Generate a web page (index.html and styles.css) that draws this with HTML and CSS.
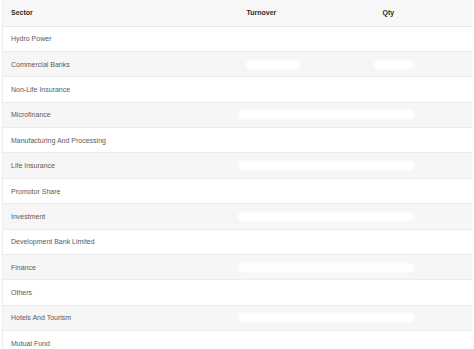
FILE: index.html
```html
<!DOCTYPE html>
<html lang="en">
<head>
    <meta charset="UTF-8">
    <meta name="viewport" content="width=device-width, initial-scale=1.0">
    <title>Sector Turnover</title>
    <link rel="stylesheet" href="styles.css">
</head>
<body>
    <div class="table-wrap">
        <table class="sector-table">
            <colgroup>
                <col class="col-sector">
                <col class="col-turnover">
                <col class="col-qty">
            </colgroup>
            <thead>
                <tr>
                    <th>Sector</th>
                    <th>Turnover</th>
                    <th>Qty</th>
                </tr>
            </thead>
            <tbody>
                <tr><td>Hydro Power</td><td><span class="blob short"></span></td><td><span class="blob qty"></span></td></tr>
                <tr><td>Commercial Banks</td><td><span class="blob short"></span></td><td><span class="blob qty"></span></td></tr>
                <tr><td>Non-Life Insurance</td><td><span class="blob long"></span></td><td></td></tr>
                <tr><td>Microfinance</td><td><span class="blob long"></span></td><td></td></tr>
                <tr><td>Manufacturing And Processing</td><td><span class="blob long"></span></td><td></td></tr>
                <tr><td>Life Insurance</td><td><span class="blob long"></span></td><td></td></tr>
                <tr><td>Promotor Share</td><td><span class="blob long"></span></td><td></td></tr>
                <tr><td>Investment</td><td><span class="blob long"></span></td><td></td></tr>
                <tr><td>Development Bank Limited</td><td><span class="blob long"></span></td><td></td></tr>
                <tr><td>Finance</td><td><span class="blob long"></span></td><td></td></tr>
                <tr><td>Others</td><td><span class="blob long"></span></td><td></td></tr>
                <tr><td>Hotels And Tourism</td><td><span class="blob long"></span></td><td></td></tr>
                <tr><td>Mutual Fund</td><td><span class="blob long"></span></td><td></td></tr>
            </tbody>
        </table>
    </div>
</body>
</html>
```

FILE: styles.css
```css
* {
    margin: 0;
    padding: 0;
    box-sizing: border-box;
}

body {
    font-family: 'Liberation Sans', Arial, sans-serif;
    background: white;
    overflow: hidden;
}

.table-wrap {
    padding-left: 2px;
    width: 472px;
}

.sector-table {
    width: 100%;
    border-collapse: collapse;
    table-layout: fixed;
    border-left: 1px solid #ececec;
    font-size: 7px;
}

.col-sector {
    width: 236px;
}

.col-turnover {
    width: 136px;
}

.sector-table th,
.sector-table td {
    text-align: left;
    padding: 0 8px;
    vertical-align: middle;
    white-space: nowrap;
}

.sector-table th {
    height: 26px;
    background: #f7f7f7;
    color: #2b2b2b;
    font-weight: bold;
    border-bottom: 1px solid #e6e6e6;
}

.sector-table td {
    height: 25.4px;
    color: #5a5a5a;
    border-bottom: 1px solid #ececec;
}

.sector-table tbody tr:nth-child(even) td {
    background: #f6f6f6;
}

.sector-table td:nth-child(2) {
    padding-left: 4px;
}

.blob {
    display: block;
    height: 9px;
    background: #fff;
    border-radius: 5px;
    filter: blur(1px);
}

.blob.short {
    width: 55px;
    margin-left: 3px;
}

.blob.qty {
    width: 40px;
    margin-left: -9px;
}

.blob.long {
    width: 176px;
    margin-left: -5px;
}
```
